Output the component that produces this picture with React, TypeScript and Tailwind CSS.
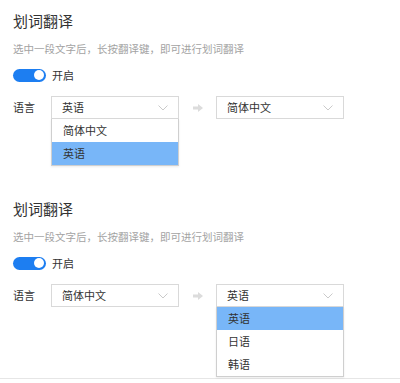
import { useState } from 'react';

type Section = {
  from: string;
  to: string;
  open: 'from' | 'to';
  options: string[];
  active: string;
  height: string;
};

const sections: Section[] = [
  { from: '英语', to: '简体中文', open: 'from', options: ['简体中文', '英语'], active: '英语', height: 'h-[188px]' },
  { from: '简体中文', to: '英语', open: 'to', options: ['英语', '日语', '韩语'], active: '英语', height: 'h-[190px]' },
];

function Chevron() {
  return (
    <svg width="10" height="6" viewBox="0 0 10 6" className="absolute right-[11px] top-[9px]">
      <path d="M0.5 0.5 L5 5 L9.5 0.5" fill="none" stroke="#c4c4c4" strokeWidth="0.9" />
    </svg>
  );
}

function Select({ value, open, options, active }: { value: string; open: boolean; options: string[]; active: string }) {
  return (
    <div className="relative w-[128px] h-[23px]">
      <div className="h-full border border-[#d9d9d9] bg-white pl-[10px] text-[11px] leading-[21px] text-[#333]">
        {value}
      </div>
      <Chevron />
      {open && (
        <div className="absolute left-0 top-[23px] w-[128px] border border-[#cfcfcf] border-t-0 bg-white shadow-[0_1px_2px_rgba(0,0,0,0.08)] z-10">
          {options.map((o) => (
            <div
              key={o}
              className={`h-[23px] pl-[11px] text-[11px] leading-[23px] text-[#333] ${o === active ? 'bg-[#78b6f8]' : ''}`}
            >
              {o}
            </div>
          ))}
        </div>
      )}
    </div>
  );
}

export default function App() {
  const [on] = useState(true);

  return (
    <div className="w-[400px] h-[383px] bg-white overflow-hidden" style={{ fontFamily: '"Noto Sans CJK SC", "Noto Sans", sans-serif' }}>
      {sections.map((s, i) => (
        <div key={i} className={`relative px-[13px] ${s.height}`}>
          <div className="pt-[11px] text-[15px] leading-[20px] text-[#333]">划词翻译</div>
          <div className="mt-[11px] text-[10.5px] leading-[14px] text-[#a3a3a3]">选中一段文字后，长按翻译键，即可进行划词翻译</div>
          <div className="mt-[12px] flex items-center h-[14px]">
            <div className={`w-[33px] h-[13px] rounded-full ${on ? 'bg-[#1d7ef1]' : 'bg-gray-300'} flex items-center justify-end pr-[2px]`}>
              <div className="w-[10px] h-[10px] rounded-full bg-white" />
            </div>
            <span className="ml-[6px] text-[11px] text-[#333]">开启</span>
          </div>
          <div className="mt-[14px] flex items-center">
            <span className="w-[38px] text-[11px] text-[#333]">语言</span>
            <Select value={s.from} open={s.open === 'from'} options={s.options} active={s.active} />
            <div className="w-[37px] flex justify-center">
              <svg width="10" height="8" viewBox="0 0 10 8">
                <path d="M0 2.5 H5 V0 L10 4 L5 8 V5.5 H0 Z" fill="#dcdcdc" />
              </svg>
            </div>
            <Select value={s.to} open={s.open === 'to'} options={s.options} active={s.active} />
          </div>
        </div>
      ))}
      <div className="h-px bg-[#e6e6e6]" />
    </div>
  );
}
